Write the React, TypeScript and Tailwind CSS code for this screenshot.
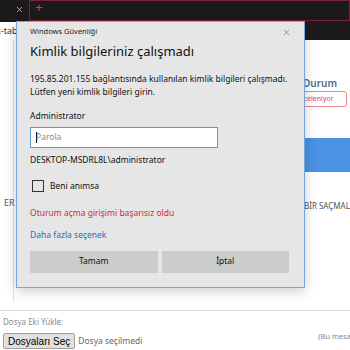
import { X } from 'lucide-react';

export default function App() {
  return (
    <div className="relative w-[350px] h-[350px] overflow-hidden bg-white font-['Noto_Sans',sans-serif]">
      {/* Browser chrome */}
      <div className="flex h-[22px] bg-[#1c1a1d]">
        <div className="w-[29px] flex items-center justify-end pr-[5px] pb-[4px]">
          <X className="w-[9px] h-[9px] text-[#c9c9c9]" strokeWidth={2} />
        </div>
        <div className="flex-1 h-[21px] border border-[#7a2336] flex items-start pl-[5px]">
          <span className="text-[#e23a4c] text-[13px] leading-[16px] -mt-[2px]">+</span>
        </div>
      </div>
      <div className="flex h-[18px]">
        <div className="w-[150px] bg-white flex items-center text-[9px] text-[#333] -ml-[4px]">k-tab</div>
        <div className="flex-1 bg-[#1c1a1d]" />
      </div>

      {/* Page */}
      <div className="flex h-[262px]">
        <div className="w-[290px] shrink-0 border-l border-[#e3e3e3] ml-[13px] flex flex-col">
          <div className="mt-[156px] -ml-[10px] text-[9px] text-[#555]">ER</div>
        </div>
        <div className="flex-1 min-w-0 flex flex-col">
          <div className="mt-[37px] text-[10px] font-semibold text-[#4d6d91] leading-[13px]">Durum</div>
          <div className="mt-[1px] h-[16px] w-[56px] shrink-0 border border-[#e88a8a] rounded-[3px] flex items-center text-[7px] text-[#e04848] -ml-[12px] pl-[5px]">
            İnceleniyor
          </div>
          <div className="mt-[31px] h-[34px] bg-[#4a92e4]" />
          <div className="mt-[28px] text-[8px] text-[#555] whitespace-nowrap ml-[1px]">BİR SAÇMALIK</div>
        </div>
      </div>

      <div className="mt-[8px] border-t border-[#dcdcdc]" />
      <div className="pl-[3px] mt-[5px] text-[8px] text-[#8a8a8a]">Dosya Eki Yükle:</div>
      <div className="flex items-start mt-[5px] pl-[3px]">
        <div className="h-[16px] px-[4px] bg-[#e1e1e1] border border-[#a0a0a0] rounded-[2px] flex items-center text-[10px] text-black font-['Liberation_Sans',sans-serif]">
          Dosyaları Seç
        </div>
        <span className="ml-[3px] mt-[2px] text-[8.5px] text-[#666]">Dosya seçilmedi</span>
        <span className="ml-auto mr-[-3px] -mt-[2px] text-[7.5px] text-[#888] whitespace-nowrap">(Bu mesaj</span>
      </div>

      {/* Windows security dialog */}
      <div className="absolute left-[16px] top-[21px] w-[289px] h-[267px] bg-[#e6e6e6] border border-[#76a6dc] shadow-[0_3px_12px_rgba(0,0,0,0.2)] flex flex-col px-[13px] text-[#111]">
        <div className="flex items-center justify-between h-[20px]">
          <span className="text-[7.5px] text-[#222]">Windows Güvenliği</span>
          <X className="w-[9px] h-[9px] text-[#555]" strokeWidth={1.5} />
        </div>
        <div className="text-[13px] leading-[18px]">Kimlik bilgileriniz çalışmadı</div>
        <div className="mt-[12px] text-[8.5px] leading-[13px]">
          195.85.201.155 bağlantısında kullanılan kimlik bilgileri çalışmadı.
          <br />
          Lütfen yeni kimlik bilgileri girin.
        </div>
        <div className="mt-[11px] text-[8.5px] leading-[13px]">Administrator</div>
        <div className="mt-[5px] w-[188px] h-[21px] bg-white border border-[#5b9bd8] flex items-center pl-[5px]">
          <span className="w-px h-[11px] bg-black" />
          <span className="text-[8.5px] text-[#8a8a8a] -ml-[1px]">Parola</span>
        </div>
        <div className="mt-[5px] text-[8.5px] leading-[13px]">DESKTOP-MSDRL8L\administrator</div>
        <div className="mt-[14px] flex items-center">
          <div className="ml-[2px] w-[12px] h-[12px] border border-[#333] bg-[#e6e6e6]" />
          <span className="ml-[6px] text-[8.5px]">Beni anımsa</span>
        </div>
        <div className="mt-[13px] text-[8.5px] leading-[13px] text-[#d32a35]">Oturum açma girişimi başarısız oldu</div>
        <div className="mt-[9px] text-[8.5px] leading-[13px] text-[#1a6fc0]">Daha fazla seçenek</div>
        <div className="mt-[10px] flex gap-[4px] w-[259px]">
          <div className="flex-1 h-[22px] bg-[#cccccc] flex items-center justify-center text-[8.5px]">Tamam</div>
          <div className="flex-1 h-[22px] bg-[#cccccc] flex items-center justify-center text-[8.5px]">İptal</div>
        </div>
      </div>
    </div>
  );
}
